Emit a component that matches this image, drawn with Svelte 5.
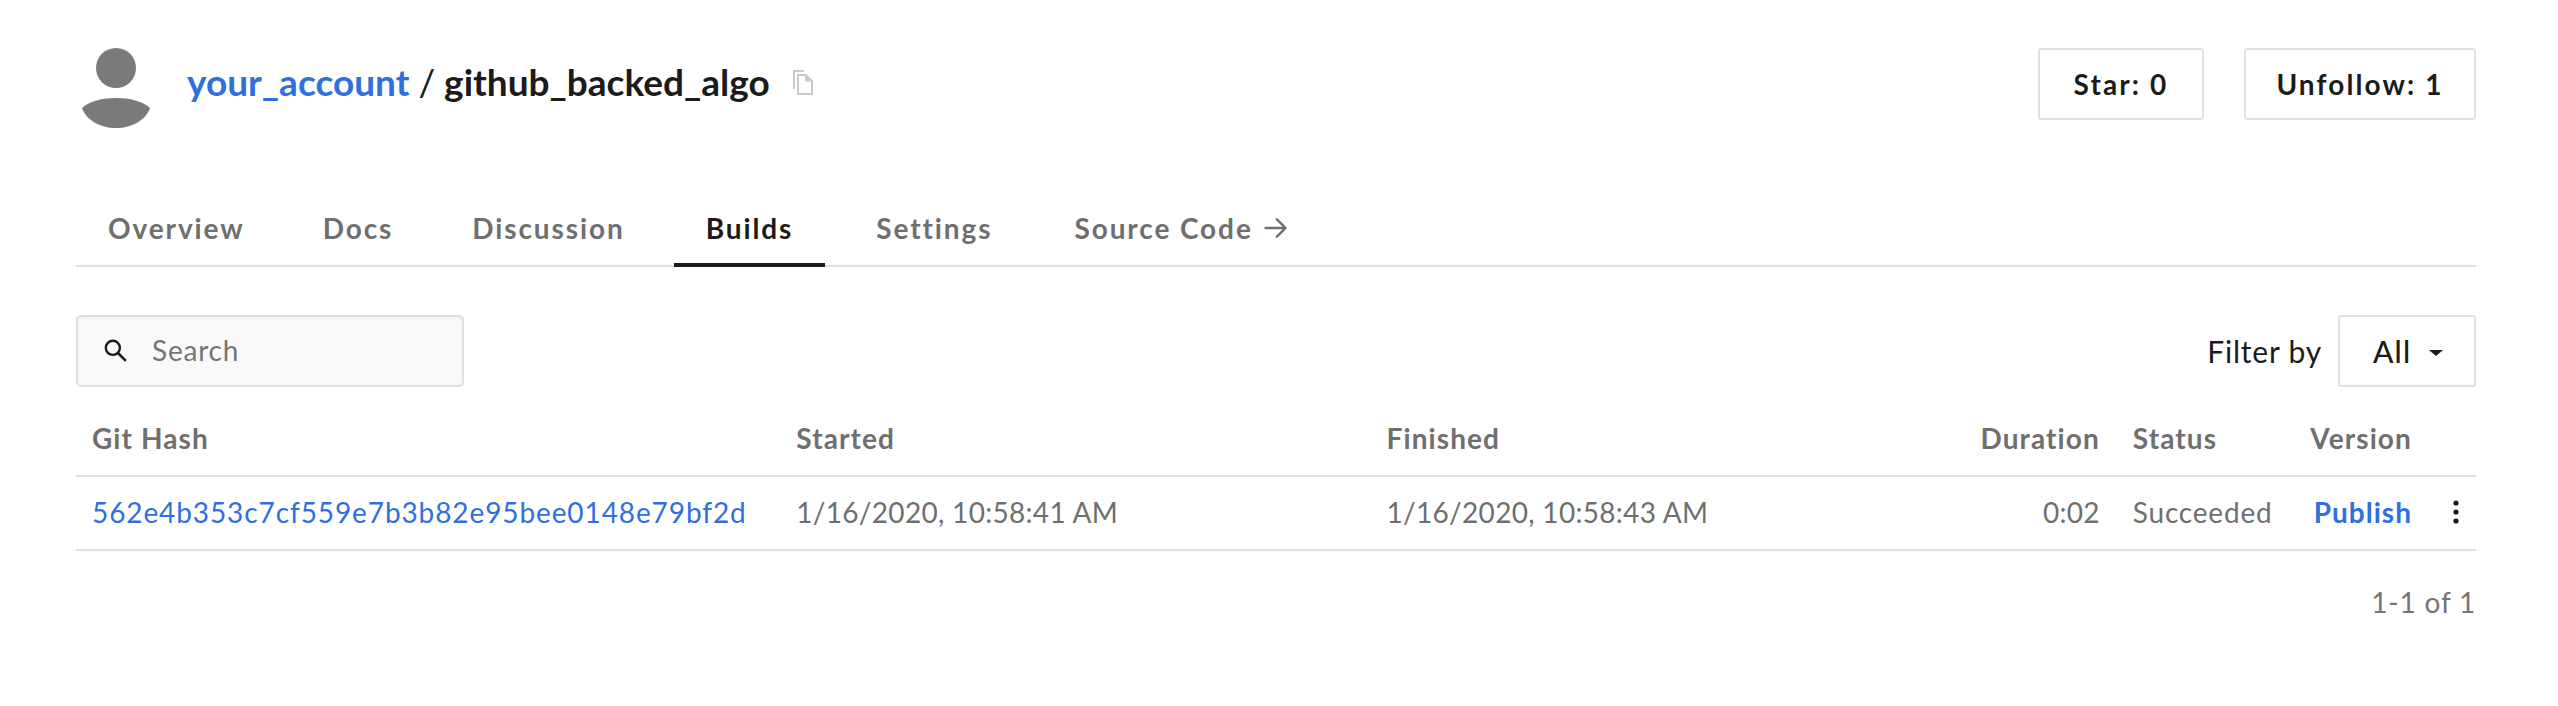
<script lang="ts">
	const tabs = ['Overview', 'Docs', 'Discussion', 'Builds', 'Settings', 'Source Code'];
	const active = 'Builds';
</script>

<div class="page">
	<header class="head">
		<div class="title">
			<svg class="avatar" viewBox="0 0 72 82" width="72" height="82">
				<circle cx="36" cy="20" r="20" fill="#7a7a7a" />
				<path d="M2 60 C10 53 22 50 36 50 C50 50 62 53 70 60 C66 72 52 80 36 80 C20 80 6 72 2 60 Z" fill="#7a7a7a" />
			</svg>
			<h1><a href="#a">your_account</a> <span class="sep">/</span> github_backed_algo</h1>
			<svg class="copy" viewBox="0 0 24 26" width="24" height="26">
				<path d="M3 1 H14 V3 H5 V20 H3 Z" fill="#c9c9c9" />
				<path d="M8 6 H15.500 L22 12 V25 H8 Z" fill="none" stroke="#c9c9c9" stroke-width="2" />
				<path d="M15 6 V12.500 H22 Z" fill="#c9c9c9" />
			</svg>
		</div>
		<div class="actions">
			<button class="btn star">Star: 0</button>
			<button class="btn unfollow">Unfollow: 1</button>
		</div>
	</header>

	<nav class="tabs">
		{#each tabs as tab}
			<a href="#t" class="tab" class:active={tab === active}>
				{tab}
				{#if tab === 'Source Code'}
					<svg viewBox="0 0 24 24" width="28" height="28"><path d="M3 12 H21 M13 4 L21 12 L13 20" fill="none" stroke="#6f6f6f" stroke-width="2" /></svg>
				{/if}
			</a>
		{/each}
	</nav>

	<div class="toolbar">
		<div class="search">
			<svg viewBox="0 0 24 24" width="26" height="26"><circle cx="10" cy="10" r="6.500" fill="none" stroke="#1b1b1b" stroke-width="2.200" /><path d="M14.500 14.500 L22 22" stroke="#1b1b1b" stroke-width="2.400" /></svg>
			<span>Search</span>
		</div>
		<div class="filter">
			<span>Filter by</span>
			<div class="select">All <i class="caret"></i></div>
		</div>
	</div>

	<table>
		<thead>
			<tr>
				<th class="c-hash">Git Hash</th>
				<th class="c-start">Started</th>
				<th class="c-end">Finished</th>
				<th class="c-dur right">Duration</th>
				<th class="c-status">Status</th>
				<th class="c-ver right">Version</th>
				<th class="c-more"></th>
			</tr>
		</thead>
		<tbody>
			<tr>
				<td class="hash"><a href="#h">562e4b353c7cf559e7b3b82e95bee0148e79bf2d</a></td>
				<td>1/16/2020, 10:58:41 AM</td>
				<td>1/16/2020, 10:58:43 AM</td>
				<td class="right">0:02</td>
				<td class="status">Succeeded</td>
				<td class="right"><a href="#p" class="publish">Publish</a></td>
				<td class="more">
					<svg viewBox="0 0 8 24" width="8" height="24"><circle cx="4" cy="3" r="2.600" /><circle cx="4" cy="12" r="2.600" /><circle cx="4" cy="21" r="2.600" /></svg>
				</td>
			</tr>
		</tbody>
	</table>

	<div class="pager">1-1 of 1</div>
</div>

<style>
	:global(body) {
		margin: 0;
		background: #fff;
		font-family: 'Lato', 'Noto Sans', sans-serif;
		color: #1b1b1b;
	}

	.page {
		box-sizing: border-box;
		width: 2558px;
		height: 706px;
		padding: 48px 82px 0 76px;
		overflow: hidden;
	}

	.head {
		display: flex;
		justify-content: space-between;
		align-items: flex-start;
		height: 143px;
	}

	.title {
		display: flex;
		align-items: center;
		height: 82px;
		padding-left: 4px;
	}

	.avatar {
		margin-right: 35px;
	}

	h1 {
		margin: 0 0 15px;
		font-size: 37px;
		font-weight: 700;
		color: #1b1b1b;
	}

	h1 a {
		color: #2f6fdf;
		text-decoration: none;
	}

	.sep {
		font-weight: 400;
	}

	.copy {
		margin: 0 0 14px 20px;
	}

	.actions {
		display: flex;
		gap: 40px;
	}

	.btn {
		height: 72px;
		padding: 0;
		background: #fff;
		border: 2px solid #e0e0e0;
		border-radius: 3px;
		font: 700 28px 'Lato', sans-serif;
		letter-spacing: 2.100px;
		color: #1b1b1b;
	}

	.star {
		width: 166px;
	}

	.unfollow {
		width: 232px;
	}

	.tabs {
		display: flex;
		height: 74px;
		border-bottom: 2px solid #e0e0e0;
	}

	.tab {
		display: flex;
		align-items: center;
		gap: 8px;
		height: 74px;
		padding: 0 32px;
		margin-right: 17px;
		box-sizing: border-box;
		font-size: 28px;
		font-weight: 700;
		letter-spacing: 1.900px;
		color: #6f6f6f;
		text-decoration: none;
	}

	.tab:nth-child(1) {
		margin-right: 14px;
	}

	.tab:nth-child(2) {
		margin-right: 15px;
	}

	.tab:nth-child(4) {
		margin-right: 19px;
	}

	.tab:nth-child(5) {
		margin-right: 18px;
	}

	.tab.active {
		height: 76px;
		padding-top: 2px;
		color: #1b1b1b;
		border-bottom: 4px solid #1b1b1b;
	}

	.toolbar {
		display: flex;
		justify-content: space-between;
		align-items: center;
		margin-top: 48px;
	}

	.search {
		display: flex;
		align-items: center;
		gap: 24px;
		box-sizing: border-box;
		width: 388px;
		height: 72px;
		padding: 0 0 2px 24px;
		background: #f9f9f9;
		border: 2px solid #e0e0e0;
		border-radius: 5px;
		box-shadow: inset 0 2px 4px rgba(0, 0, 0, 0.03);
		font-size: 28px;
		letter-spacing: 0.800px;
		color: #757575;
	}

	.filter {
		display: flex;
		align-items: center;
		gap: 16px;
		font-size: 30px;
		letter-spacing: 0.800px;
	}

	.select {
		display: flex;
		align-items: center;
		gap: 18px;
		box-sizing: border-box;
		width: 138px;
		height: 72px;
		padding-left: 33px;
		border: 2px solid #e0e0e0;
		border-radius: 3px;
		font-weight: 500;
		letter-spacing: 1.200px;
	}

	.caret {
		width: 0;
		height: 0;
		margin-top: 4px;
		border: 7px solid transparent;
		border-top: 6px solid #1b1b1b;
		border-bottom: 0;
	}

	table {
		width: 2400px;
		margin-top: 16px;
		border-collapse: collapse;
		table-layout: fixed;
		font-size: 28px;
	}

	th {
		height: 70px;
		padding: 0 0 2px;
		text-align: left;
		font-weight: 700;
		letter-spacing: 1.100px;
		color: #6f6f6f;
		border-bottom: 2px solid #e0e0e0;
	}

	td {
		height: 70px;
		padding: 0 0 2px;
		letter-spacing: 0.300px;
		color: #6f6f6f;
		border-bottom: 2px solid #e0e0e0;
		white-space: nowrap;
	}

	th:first-child,
	td:first-child {
		padding-left: 16px;
	}

	.c-hash { width: 704px; }
	.c-start { width: 590px; }
	.c-end { width: 539px; }
	.c-dur { width: 174px; }
	.c-status { width: 158px; padding-left: 33px; }
	.c-ver { width: 121px; }
	.c-more { width: 64px; }

	.status {
		padding-left: 33px;
		letter-spacing: 0.800px;
	}

	.right {
		text-align: right;
	}

	td a {
		color: #2f6fdf;
		text-decoration: none;
	}

	.hash {
		letter-spacing: 0.900px;
	}

	.publish {
		font-weight: 700;
		letter-spacing: 1px;
	}

	.more {
		padding-right: 16px;
	}

	.more svg {
		display: block;
		margin-left: auto;
		fill: #1b1b1b;
	}

	.pager {
		margin-top: 34px;
		text-align: right;
		font-size: 28px;
		letter-spacing: 0.800px;
		color: #757575;
	}
</style>
